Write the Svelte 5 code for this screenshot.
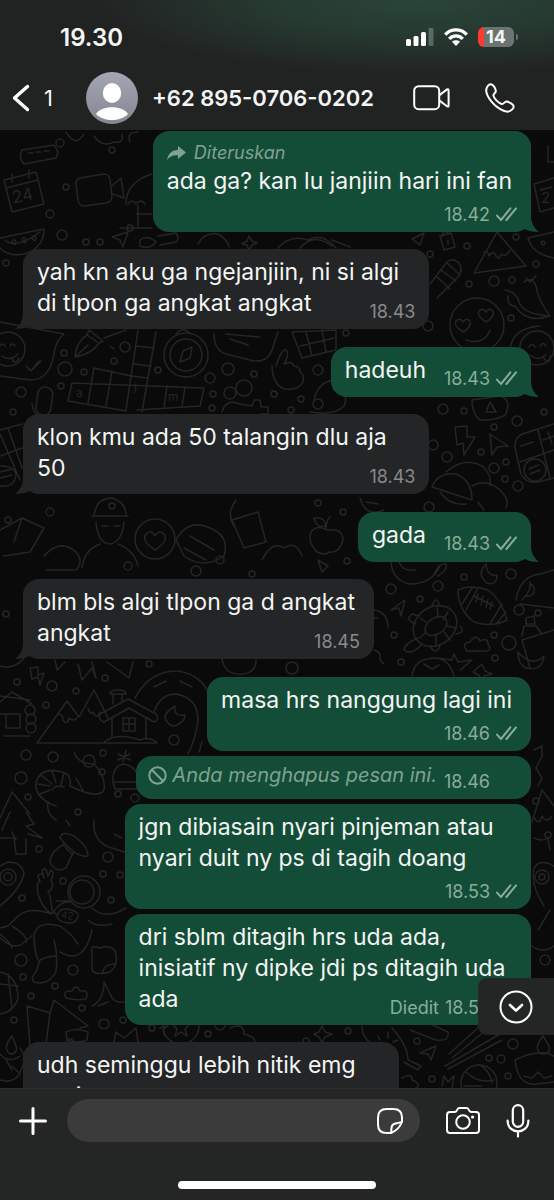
<script lang="ts">
    type Message = {
        id: number
        lines: Array<string>
        time: string
        out?: boolean
        tail?: boolean
        read?: boolean
        below?: boolean
        forwarded?: boolean
        deleted?: boolean
        edited?: boolean
        width?: number
    }

    const contact = '+62 895-0706-0202'

    const messages: Array<Message> = [
        { id: 1, lines: ['ada ga? kan lu janjiin hari ini fan'], time: '18.42', out: true, tail: true, read: true, below: true, forwarded: true },
        { id: 2, lines: ['yah kn aku ga ngejanjiin, ni si algi', 'di tlpon ga angkat angkat'], time: '18.43', tail: true, width: 80 },
        { id: 3, lines: ['hadeuh'], time: '18.43', out: true, tail: true, read: true },
        { id: 4, lines: ['klon kmu ada 50 talangin dlu aja', '50'], time: '18.43', tail: true, width: 80 },
        { id: 5, lines: ['gada'], time: '18.43', out: true, tail: true, read: true },
        { id: 6, lines: ['blm bls algi tlpon ga d angkat', 'angkat'], time: '18.45', tail: true },
        { id: 7, lines: ['masa hrs nanggung lagi ini'], time: '18.46', out: true, read: true, below: true },
        { id: 8, lines: ['Anda menghapus pesan ini.'], time: '18.46', out: true, deleted: true },
        { id: 9, lines: ['jgn dibiasain nyari pinjeman atau', 'nyari duit ny ps di tagih doang'], time: '18.53', out: true, read: true, below: true, width: 80 },
        { id: 10, lines: ['dri sblm ditagih hrs uda ada,', 'inisiatif ny dipke jdi ps ditagih uda', 'ada'], time: '18.53', out: true, read: true, edited: true, width: 80 },
        { id: 11, lines: ['udh seminggu lebih nitik emg', 'nasi'], time: '', width: 74 }
    ]

    // loose bubbles scattered between the wallpaper doodles: x, y, radius
    const dots = [
        [62, 235, 5], [86, 242, 3], [100, 242, 3], [6, 263, 3], [125, 347, 5], [64, 353, 3], [114, 361, 3],
        [65, 369, 7], [84, 372, 3], [158, 370, 3], [21, 392, 5], [61, 386, 3], [13, 412, 3], [210, 378, 5],
        [228, 369, 6], [254, 374, 3], [244, 388, 8], [230, 393, 6], [213, 394, 3], [212, 408, 3], [274, 394, 3],
        [318, 370, 5], [301, 399, 3], [291, 410, 3], [467, 246, 3], [516, 237, 3], [494, 281, 5], [512, 280, 3],
        [469, 284, 3], [536, 264, 3], [511, 318, 3], [428, 326, 5], [430, 254, 3], [346, 333, 3], [318, 404, 5],
        [443, 409, 5], [464, 411, 3], [517, 421, 5], [494, 427, 3], [544, 412, 3], [447, 457, 5], [481, 452, 3],
        [433, 445, 5], [494, 468, 5], [506, 462, 3], [505, 479, 3], [518, 486, 5], [429, 507, 5], [318, 503, 3],
        [343, 512, 3], [347, 561, 3], [464, 577, 3], [438, 586, 5], [511, 574, 5], [391, 589, 5], [420, 599, 3],
        [519, 610, 5], [538, 613, 3], [394, 635, 3], [494, 635, 3], [509, 643, 7], [401, 662, 3], [495, 658, 3],
        [149, 664, 3], [105, 678, 3], [52, 686, 5], [17, 682, 3], [76, 691, 3], [46, 705, 3], [174, 740, 5],
        [26, 755, 5], [53, 757, 5], [89, 761, 6], [103, 753, 3], [102, 772, 3], [21, 778, 6], [28, 797, 3],
        [118, 794, 3], [135, 798, 4], [78, 812, 3], [39, 849, 3], [108, 857, 5], [103, 874, 3], [120, 875, 3],
        [63, 881, 3], [22, 898, 3], [111, 900, 3], [21, 960, 6], [73, 970, 5], [23, 977, 3], [55, 986, 3],
        [31, 996, 3], [82, 1008, 3], [14, 1020, 3], [104, 1024, 5], [123, 1020, 3], [70, 1043, 4], [152, 1028, 3],
        [208, 1034, 3], [220, 1025, 5], [348, 1031, 3], [306, 1041, 3], [417, 1041, 3], [489, 1058, 3],
        [501, 1059, 4], [513, 1044, 5], [508, 1076, 3], [432, 1079, 3], [545, 960, 5], [536, 801, 3], [548, 835, 3],
        [60, 143, 4], [112, 150, 3], [66, 187, 3], [50, 214, 4], [130, 228, 3], [8, 520, 3], [50, 512, 4],
        [112, 506, 3], [128, 566, 4], [220, 560, 4], [252, 574, 3], [6, 614, 3], [196, 571, 5], [292, 668, 6]
    ]
</script>

{#snippet meta(m: Message)}
    <div class="meta">
        {#if m.edited}<span>Diedit</span>{/if}
        {#if m.time}<time>{m.time}</time>{/if}
        {#if m.read}
            <svg width="21" height="15" viewBox="0 0 21 15" fill="none" stroke="currentColor" stroke-width="2" stroke-linecap="round">
                <path d="M1 8.6 L5 13 L14.4 1.4 M10.4 13 L20 1.4" />
            </svg>
        {/if}
    </div>
{/snippet}

<main>
    <header>
        <div class="status">
            <span class="clock">19.30</span>
            <div class="status-icons">
                <svg width="28" height="18" viewBox="0 0 28 18" fill="#fff">
                    <rect x="0" y="11" width="5" height="7" rx="1.5" />
                    <rect x="7.5" y="8" width="5" height="10" rx="1.5" />
                    <rect x="15" y="4" width="5" height="14" rx="1.5" />
                    <rect x="22.5" y="0" width="5" height="18" rx="1.5" opacity="0.25" />
                </svg>
                <svg width="24" height="18" viewBox="0 0 24 18">
                    <g fill="none" stroke="#fff" stroke-width="3.2">
                        <path d="M1.2 6.6 C7 0.2 17 0.2 22.8 6.6" />
                        <path d="M5.2 10.8 C9 6.8 15 6.8 18.8 10.8" />
                    </g>
                    <path d="M12 18 L8 13.8 C10 11.8 14 11.8 16 13.8 Z" fill="#fff" />
                </svg>
                <div class="battery"><span>14</span></div>
            </div>
        </div>
        <div class="contact">
            <button class="back" aria-label="Kembali">
                <svg width="18" height="28" viewBox="0 0 18 28" fill="none" stroke="#fff" stroke-width="3.4" stroke-linecap="round" stroke-linejoin="round">
                    <path d="M15.5 2.5 L2.5 14 L15.5 25.5" />
                </svg>
                <span>1</span>
            </button>
            <svg class="avatar" viewBox="0 0 52 52">
                <defs>
                    <linearGradient id="avatar-bg" x1="0" y1="0" x2="0" y2="1">
                        <stop offset="0" stop-color="#a3a6b4" />
                        <stop offset="1" stop-color="#858791" />
                    </linearGradient>
                </defs>
                <circle cx="26" cy="26" r="26" fill="url(#avatar-bg)" />
                <ellipse cx="26" cy="21" rx="9.2" ry="10" fill="#fff" />
                <path d="M10 42 C15 33 37 33 42 42 C34 50 18 50 10 42 Z" fill="#fff" />
            </svg>
            <h1>{contact}</h1>
            <button class="video" aria-label="Panggilan video">
                <svg width="37" height="26" viewBox="0 0 37 26" fill="none" stroke="#fff" stroke-width="2" stroke-linejoin="round">
                    <rect x="1.2" y="1.2" width="25" height="23" rx="4.5" />
                    <path d="M26.2 10.4 L34 4.4 Q35.6 3.6 35.6 5.4 V20.4 Q35.6 22.2 34 21.2 L26.2 15.4" />
                </svg>
            </button>
            <button class="call" aria-label="Panggilan suara">
                <svg width="30" height="30" viewBox="0 0 30 30" fill="none" stroke="#fff" stroke-width="2" stroke-linejoin="round">
                    <path d="M1.5 5.5 C2.5 2.8 4.8 1.2 6.6 1.4 C8.6 1.8 10.6 6 10.8 8 C11 10 8.2 10.6 8.4 12.6 C8.8 15.4 13.8 20.4 16.8 21 C19 21.4 19.4 18.4 21.6 18.6 C23.6 18.8 28 21.2 28.6 23 C29 25.2 26.4 28 23.4 28.6 C19 29.2 11.4 24.4 7.4 19.6 C3.6 15.2 0.4 9.2 1.5 5.5 Z" />
                </svg>
            </button>
        </div>
    </header>

    <section class="chat">
        <svg class="wallpaper" viewBox="0 130 554 958" preserveAspectRatio="xMidYMin slice" aria-hidden="true">
            {#each dots as [x, y, r]}
                <circle cx={x} cy={y} r={r} />
            {/each}
            <!-- camera roll, calendar, palm hut -->
            <path d="M22 150 L54 145 Q60 152 56 158 L24 164 Q18 158 22 150 Z M28 153 h5 M36 152 h5 M44 151 h5" />
            <path d="M4 180 L36 172 L44 204 L12 212 Z M6 188 L38 180 M12 174 v8 M29 170 v8" />
            <path d="M80 178 L104 174 Q109 174 110 180 L112 196 Q112 202 106 203 L84 206 Q79 206 78 200 L76 184 Q76 179 80 178 Z M112 186 L121 178 L124 198 L113 194" />
            <path d="M126 204 Q126 182 152 174 M128 204 q4 -6 8 0 q5 -6 9 0 M138 206 v22 M136 214 h16 M120 228 h32" />
            <path d="M130 142 q-4 -10 8 -10 M94 136 q8 12 20 6 q10 2 8 -8 M66 132 q10 16 18 2" />
            <!-- melon slices, cursors, telescope -->
            <path d="M0 238 L44 229 Q44 248 24 254 Q8 257 0 248 M5 240 Q16 250 40 232 M12 242 q2 -5 4 0 q0 5 -4 0 M22 240 q2 -5 4 0 q0 5 -4 0 M32 238 q2 -5 4 0 q-1 5 -4 0" />
            <path d="M112 237 L128 232 L123 247 L120 240 Z M158 236 L176 233 Q180 239 176 242 L160 245 M140 240 q8 -6 16 2 q-6 8 -16 4 Z" />
            <path d="M278 248 q12 -14 30 -8 q14 -8 28 8 M300 248 q14 -16 32 -2 M332 240 L350 247 M412 239 L424 233 L420 245 Z M440 236 l11 -3 l4 14 l-11 3 Z M442 236 q2 -8 7 -2 M448 240 v4" />
            <path d="M198 244 Q204 232 218 234 Q228 240 229 247 M249 236 l3 5 l5 2 l-5 2 l-3 5 l-2 -5 l-5 -1 l5 -3 Z" />
            <!-- peak, pencil, chilies -->
            <path d="M474 273 L497 232 L526 266 Z M484 252 q4 -2 5 4 q4 -6 6 -2 q4 8 6 0 q5 4 9 -4" />
            <path d="M430 284 L447 262 Q452 257 459 263 Q463 269 459 276 L437 298 M436 276 L450 289 M441 270 L456 281 M447 263 L460 275" />
            <path d="M505 290 q12 2 14 12 q4 12 30 14 q-22 8 -34 -10 q-8 0 -7 -10 M524 282 q8 -6 12 4 q2 14 14 30 M526 278 l4 4 l6 -6" />
            <path d="M528 238 L554 232 M528 238 Q532 254 554 258 M541 243 q2 -4 4 0 q0 4 -4 0" />
            <path d="M548 146 v16 h6 M530 160 a4 4 0 1 0 0 8 M534 184 L554 178 M534 184 L540 212 L554 208 M540 190 l12 -3" />
            <!-- faces -->
            <circle cx="477" cy="325" r="27" />
            <path d="M463 332 q-10 -6 -7 -11 q4 -4 7 1 q3 -5 7 -1 q2 6 -7 11 Z M486 322 q-10 -6 -7 -11 q4 -4 7 1 q3 -5 7 -1 q2 6 -7 11 Z M466 340 q18 6 24 -10" />
            <circle cx="537" cy="348" r="17" />
            <path d="M510 350 Q512 328 540 326 M529 347 q3 -5 6 0 M540 346 q3 -5 6 0 M530 355 q8 7 16 0 M543 357 l4 5 q4 -1 3 -6" />
            <path d="M0 322 L64 334 Q56 340 54 354 Q50 380 30 380 L0 376 M26 366 l5 5 l8 -10 M32 370 l9 -9" />
            <circle cx="8" cy="349" r="17" />
            <path d="M0 346 q3 -4 5 0 M10 346 q3 -4 5 0 M2 356 q8 6 16 -2 M12 358 q2 8 7 0" />
            <!-- pen, crossword, compass -->
            <path d="M75 357 Q76 342 87 335 L99 343 Q92 354 75 357 Z M75 357 L88 345 M87 335 L89 330 L103 341 L99 343 M104 338 L126 330 M110 346 l4 3" />
            <path d="M72 383 L204 388 L200 406 L137 410 M72 383 L68 401 L126 411 M94 368 L131 376 L148 378 M94 368 L88 403 M112 371 L106 406 M138 330 L126 410 M156 332 L142 412 M136 346 L154 348 M134 364 L151 366 M167 386 L164 407 M185 387 L182 406" />
            <circle cx="186" cy="355" r="22" />
            <circle cx="186" cy="355" r="16" />
            <path d="M180 362 L183 351 L192 347 L190 358 Z M176 334 q6 -8 14 -1" />
            <path d="M214 334 Q214 350 226 354 L254 361 Q268 362 272 350 L278 332 M226 334 L260 337 M230 339 L248 345" />
            <path d="M292 332 L336 330 L336 350 L302 358 Z M300 346 L334 338 M306 332 l6 24 M322 330 l4 22" />
            <path d="M276 366 Q282 348 286 350 Q290 354 284 364 q8 -4 10 2 q6 0 6 6 q6 4 2 12 q-8 8 -20 4 q-10 -6 -10 -22 M314 400 q4 -18 20 -20 q8 6 0 10 q16 2 10 16 q-10 10 -34 6" />
            <rect x="37" y="387" width="15" height="28" rx="7" transform="rotate(8 44 400)" />
            <path d="M32 404 q2 14 16 16 M222 412 q4 -14 18 -8 l12 2 l2 -6 h6 l1 7 h7 v7 h-7 l-2 6" />
            <!-- lock, bolt, calculator, umbrellas -->
            <path d="M472 400 L500 396 Q508 398 508 406 L506 414 Q500 420 480 420 Q472 414 472 400 Z M490 402 l6 10 h-10 Z" />
            <path d="M455 427 L467 426 L467 437 L475 437 L464 455 L463 443 L457 445 Z M490 434 L508 446 L497 447 L492 455 Z" />
            <path d="M554 424 L522 434 Q514 438 515 448 L521 474 Q526 484 538 482 L554 478 M520 462 L554 450 M538 430 L550 478 M521 446 l12 -4 M543 440 l12 -4 M548 432 l4 12" />
            <circle cx="535" cy="470" r="11" />
            <path d="M529 469 l10 -4 M530 474 l10 -4 M432 487 Q438 472 456 474 Q472 480 472 500 Z M446 472 Q464 456 482 466 Q492 474 490 486 M472 486 Q486 478 500 490 Q510 500 506 508 M440 492 q10 14 26 12 M478 502 l6 8" />
            <path d="M0 430 L22 424 M0 434 l20 46 M0 456 L22 448 M8 428 l14 40 M0 466 q16 0 16 10 q-2 12 -16 10 M0 472 l12 -3 M0 478 l12 -3" />
            <!-- apple, boy, book -->
            <path d="M327 530 q-10 -6 -16 2 q-4 10 6 20 q8 4 12 0 q10 2 14 -12 q0 -12 -16 -10 Z M326 529 q0 -8 4 -12 M326 526 q-10 2 -12 -8 q10 -2 12 8" />
            <circle cx="155" cy="539" r="20" />
            <path d="M155 550 q-14 -9 -9 -16 q6 -5 9 2 q4 -7 9 -2 q5 7 -9 16 Z M94 516 q2 -18 18 -18 q14 4 14 18 M92 516 h36 M96 522 q2 22 14 22 q12 -2 14 -22 M100 544 q-16 6 -18 24 M118 544 q16 6 20 22 M102 526 h6 M114 526 h6" />
            <path d="M0 530 L22 518 L44 528 L30 552 L4 556 M22 518 l-8 24 M44 556 q16 -18 32 -4 q8 10 0 18 h-30 M232 520 l26 -8 l8 30 l-22 6 Z M262 560 q10 -20 22 -12 q12 -8 18 8 M236 500 q-10 14 -2 26 M360 498 q6 20 24 12 M366 502 l12 2" />
            <path d="M176 540 q12 -22 34 -12 q20 8 14 28 q-20 14 -40 0 Z M190 536 l24 14 M184 548 l22 12 M318 560 l4 12 l6 -6 Z" />
            <!-- dog, moon, ball, taco, turtle, cloud -->
            <path d="M391 562 Q392 580 410 584 Q432 584 440 566 M399 562 q4 10 16 8 M434 574 q6 -12 12 -10 q2 6 -8 12 M486 564 q-10 10 1 19 q10 3 10 -8 q-10 2 -11 -11 Z" />
            <path d="M458 590 Q470 584 488 590 Q502 600 507 620 Q492 628 474 622 Q458 610 458 590 Z M472 588 l-10 16 M478 588 l-12 22 M502 604 l-12 20 M506 612 l-10 12 M474 596 l20 10 M478 594 l-2 8 M483 596 l-2 9 M488 599 l-2 8 M492 602 l-2 7" />
            <path d="M516 600 Q520 576 540 574 L554 570 M520 604 L554 608 M522 600 q10 -10 8 -18 M526 596 a6 6 0 1 0 4 -12" />
            <ellipse cx="435" cy="626" rx="23" ry="19" transform="rotate(-35 435 626)" />
            <ellipse cx="436" cy="626" rx="12" ry="8" transform="rotate(-35 436 626)" />
            <path d="M437 606 l1 11 M420 618 l6 4 M448 612 l-5 8 M456 628 l-9 -2 M436 646 v-12 M420 638 l6 -6 M450 640 l-6 -8 M432 606 q4 -12 8 0 M416 624 q-12 -4 -4 -10 l7 2 M418 638 q-14 6 -14 12 q8 6 18 -6 M430 646 q6 10 10 0 M456 634 q10 -2 4 -8 M391 610 L405 600 L401 616 L399 608 Z" />
            <path d="M467 651 q-6 -8 3 -9 q6 -9 10 -1 q8 -4 8 3 q5 8 -4 7 Z M412 676 Q414 658 436 658 Q450 660 454 676 M436 658 l16 2 l2 -6 l4 8 l14 -2 l-12 10 M424 664 l8 5 l7 -4 M482 664 l3 7 l7 3 l-8 2 l-2 4 l-3 -5 l-6 -3 Z" />
            <path d="M522 640 L554 630 M522 640 l8 28 M524 626 h12 l6 8 M524 626 l-2 10 M526 618 l8 -2 l1 8 h-9 Z M518 652 q14 16 26 4 q-2 16 -18 12 q-8 -4 -8 -16 M374 610 q14 2 14 18 M374 618 h4 M374 650 q8 2 6 10 l4 4" />
            <!-- cabin, mountains, house, road -->
            <path d="M0 702 L12 692 L32 704 M0 696 L30 700 M0 714 l6 0 v14 h14 v-14 h-14 M4 736 h26" />
            <circle cx="30" cy="710" r="5" />
            <circle cx="31" cy="719" r="5" />
            <circle cx="31" cy="728" r="5" />
            <path d="M37 743 L67 701 L79 717 L94 690 L108 718 M58 714 q5 0 5 6 q4 6 6 -2 q4 4 8 0 M88 708 q2 8 5 4 q4 8 7 0 M37 743 H157 Q150 736 140 740 Q118 732 104 742 M100 714 L128 699 L156 714 Q160 720 154 722 L129 708 L104 722 Q98 720 100 714 Z M112 718 V738 M146 718 V738 M113 704 V694 M122 700 V694 M110 694 q0 -4 8 -4 q8 0 8 4 Z M123 718 h12 v13 h-12 Z M129 718 v13 M123 724 h12" />
            <path d="M135 698 Q150 670 178 671 Q208 676 212 706 M154 712 Q160 694 176 694 Q198 698 198 720 Q196 738 188 754 M154 687 l12 -6 M180 681 l12 6 M202 742 l-3 10 M175 706 q-10 6 -10 12 q4 10 12 7 q8 -4 8 -10 q-12 2 -10 -9" />
            <path d="M55 660 l2 10 l8 -8 M78 664 l4 16 l10 -12 l4 10 l-4 -16 M107 662 l22 16 l4 -16 M30 668 l8 -1 v8 l6 -2 l-4 12 l-2 -8 l-6 2 Z M222 658 q2 18 22 16 q12 -2 12 -14 M0 666 q14 4 24 -8" />
            <!-- shrimp, beanie, pines -->
            <path d="M56 806 Q34 798 36 782 Q42 766 62 772 Q72 774 70 786 Q98 800 104 790 Q106 776 94 764 Q78 764 74 752 M48 802 q-2 12 8 18 M52 790 q4 -6 12 -3 M38 784 l12 2 M42 776 l10 8 M52 771 l4 12 M64 773 l-3 12 M40 794 l10 -4 M76 778 l8 14 M113 782 Q112 766 124 764 Q134 766 137 774 M113 782 h24 v7 h-22 Z" />
            <path d="M118 754 l12 6 M126 750 l-3 12 M118 760 l12 -6 M0 818 L12 792 L30 814 M2 830 L10 812 M26 812 l8 12 l-8 2 l16 12 l-14 -4 M0 838 h16 M14 838 l2 16 h10 l0 -15 M12 832 l4 8 M94 820 q-2 18 12 26 l18 6 M114 834 l8 4 M66 820 l4 6" />
            <path d="M60 838 Q62 830 74 836 Q88 846 88 856 Q76 858 60 838 Z M64 846 l8 8 M64 844 Q50 852 50 862 Q56 874 66 868 Q70 858 74 852 M0 906 Q20 890 24 874 Q22 862 8 862 L0 866" />
            <circle cx="8" cy="877" r="8" />
            <circle cx="8" cy="877" r="4" />
            <!-- astronaut -->
            <circle cx="84" cy="892" r="16" />
            <circle cx="82" cy="892" r="12" />
            <path d="M38 894 Q36 880 40 882 L38 876 q4 -6 6 2 l-2 -8 q4 -4 6 6 l3 -6 q4 2 0 10 q4 8 -3 12 Q50 892 52 910 L56 914 M38 894 Q42 908 52 914 M52 914 Q60 900 72 902 M56 901 h14 M92 908 Q102 918 118 912 L126 908 M88 920 Q96 928 112 924 M52 914 Q30 906 18 916 L8 926 L0 928 M0 938 Q14 950 22 944 L32 936 M12 926 Q28 936 26 942 M0 934 Q12 944 12 948 M34 934 Q38 920 60 926 Q72 934 78 944 M34 934 Q34 952 38 960 M54 940 Q58 954 56 972 Q48 986 34 982 Q30 978 36 972 L40 960 Q48 956 56 956 M60 952 Q84 966 92 930 M57 916 q2 -8 10 -7 q12 2 11 7 q-2 8 -10 7 q-10 -1 -11 -7 Z" />
            <path d="M92 952 Q90 944 100 948 Q114 944 116 954 Q118 966 110 972 Q96 976 92 970 Z M102 974 q2 -10 12 -10 M66 998 q-4 -8 6 -7 q4 -8 8 0 q10 -2 6 8 q-10 2 -20 -1 Z M92 1006 Q104 1000 104 982 L110 994 Q114 1004 124 1002 M98 1006 l10 -4 M0 972 Q18 976 18 998 Q14 1012 0 1014 M0 984 l18 2 M8 974 l4 34" />
            <path d="M27 1006 L50 1013 L54 1000 L88 1026 L80 1028 M27 1006 L30 1046 M50 1013 L46 1044 M66 1032 q10 -5 22 0 l-1 8 q-10 4 -20 0 Z M12 1036 q-10 12 -2 18 q8 0 6 -8 Z M0 1054 q8 10 20 2 M6 1060 l6 10 M0 1080 q12 4 20 -6 l-8 -8 M20 1048 q8 10 0 24 M114 1042 l2 -10 l8 6 l12 -10 l2 14 M160 1028 l8 -2 l-5 4 l2 6" />
            <circle cx="181" cy="1026" r="18" />
            <path d="M181 1018 l3 6 h6 l-5 5 l2 7 l-6 -4 l-6 4 l2 -7 l-5 -5 h6 Z M230 1028 q14 -6 14 6 q16 4 8 12 M322 1026 l3 6 l7 2 l-7 3 l-3 6 l-3 -6 l-5 -3 l5 -2 Z" />
            <!-- balloon, chopsticks, ball, lamp -->
            <path d="M362 1026 Q362 1038 372 1044 M392 1028 Q408 1046 408 1060 L421 1066 L418 1070 L404 1062 M378 1036 l2 4 M388 1032 v6 M398 1040 l-5 2 M410 1030 l26 10 q14 2 12 -8 l-18 -8 M420 1053 L436 1046 L431 1060 L428 1054 Z M449 1054 L480 1026 M452 1058 L486 1030 M445 1066 L500 1034 M448 1069 L502 1040 M402 1078 q10 -6 10 2 q10 4 4 8 M442 1086 l2 -10 l4 6 l6 -6 l-2 12" />
            <circle cx="479" cy="1083" r="18" />
            <path d="M466 1072 q12 12 28 8 M480 1065 q10 6 12 18 M464 1086 h18 M543 1036 q-10 12 -2 18 q10 0 8 -8 Z M515 1060 Q540 1048 554 1056 M515 1060 Q518 1086 536 1084 L554 1082 M524 1076 l8 2 l6 -6 l6 6 l8 -2" />
            <!-- right edge -->
            <path d="M534 750 l8 -4 v10 l-6 12 l6 10 l-4 8 M532 822 L542 790 L554 806 M534 818 q6 8 8 -2 q4 8 10 0 M534 838 q8 4 14 0 l2 12 M538 930 l12 -20 M532 946 q10 8 22 0 M554 866 Q540 858 534 868 Q530 884 544 906" />
            <circle cx="542" cy="877" r="7" />
            <circle cx="542" cy="877" r="3" />
            <g class="lettering">
                <text x="12" y="202" font-size="17" transform="rotate(-12 20 196)">24</text>
                <text x="61" y="919" font-size="10" transform="rotate(10 68 916)">42</text>
                <text x="76" y="397" font-size="12">a</text>
                <text x="134" y="391" font-size="12">j</text>
                <text x="168" y="401" font-size="12">m</text>
                <text x="541" y="203" font-size="15">2</text>
            </g>
        </svg>

        <ul>
            {#each messages as m (m.id)}
                <li class:out={m.out} class:deleted={m.deleted} class:single={m.lines.length === 1 && !m.below} style:width={m.width ? m.width + '%' : null}>
                    {#if m.forwarded}
                        <p class="forwarded">
                            <svg width="19" height="14" viewBox="0 0 19 14" fill="currentColor">
                                <path d="M11 0 L19 6.6 L11 13 V9.4 C6 9 3 10.4 0 14 C1 8.6 4 4.4 11 3.8 Z" />
                            </svg>
                            Diteruskan
                        </p>
                    {/if}
                    {#if m.deleted}
                        <svg class="ban" width="19" height="19" viewBox="0 0 19 19" fill="none" stroke="currentColor" stroke-width="2">
                            <circle cx="9.5" cy="9.5" r="8.2" />
                            <path d="M3.8 3.8 L15.2 15.2" />
                        </svg>
                    {/if}
                    {#if m.below}
                        {#each m.lines as line}
                            <p class="text">{line}</p>
                        {/each}
                        <div class="below">{@render meta(m)}</div>
                    {:else}
                        {#each m.lines.slice(0, -1) as line}
                            <p class="text">{line}</p>
                        {/each}
                        <div class="last">
                            <p class="text">{m.lines[m.lines.length - 1]}</p>
                            {@render meta(m)}
                        </div>
                    {/if}
                    {#if m.tail}
                        <svg class="tail" width="22" height="22" viewBox="0 0 22 22">
                            <path d="M0 0 H14 V6 C14 13 17 18 22 22 C16 22 11 21 8 19 L0 22 Z" />
                        </svg>
                    {/if}
                </li>
            {/each}
        </ul>

        <button class="scroll-down" aria-label="Ke pesan terbaru">
            <svg width="34" height="34" viewBox="0 0 34 34" fill="none" stroke="#fff" stroke-width="2" stroke-linecap="round" stroke-linejoin="round">
                <circle cx="17" cy="17" r="15.5" />
                <path d="M11 15 L17 20.6 L23 15" stroke-width="2.6" />
            </svg>
        </button>
    </section>

    <footer>
        <div class="compose">
            <button class="add" aria-label="Lampirkan">
                <svg width="28" height="28" viewBox="0 0 28 28" stroke="#fff" stroke-width="3" stroke-linecap="round">
                    <path d="M14 1.5 V26.5 M1.5 14 H26.5" />
                </svg>
            </button>
            <div class="field">
                <input type="text" aria-label="Pesan" />
                <button aria-label="Stiker">
                    <svg width="26" height="26" viewBox="0 0 26 26" fill="none" stroke="#fff" stroke-width="2" stroke-linejoin="round">
                        <path d="M14 25 H9.5 Q1 25 1 16.5 V9.5 Q1 1 9.5 1 H16.5 Q25 1 25 9.5 V14 C23 19 19 23 14 25 Z" />
                        <path d="M14 25 C14.6 22 14 20.4 15 18 C16.4 14.8 21 15.6 25 14" />
                    </svg>
                </button>
            </div>
            <button class="camera" aria-label="Kamera">
                <svg width="34" height="27" viewBox="0 0 34 27" fill="none" stroke="#fff" stroke-width="2" stroke-linejoin="round">
                    <path d="M4 5 H8.6 Q10 5 10.8 3.6 L11.4 2.4 Q12 1 13.6 1 H20.4 Q22 1 22.6 2.4 L23.2 3.6 Q24 5 25.4 5 H30 Q33 5 33 8 V23 Q33 26 30 26 H4 Q1 26 1 23 V8 Q1 5 4 5 Z" />
                    <circle cx="17" cy="15" r="6.8" />
                    <circle cx="26.6" cy="10" r="1.6" fill="#fff" stroke="none" />
                </svg>
            </button>
            <button class="mic" aria-label="Rekam suara">
                <svg width="24" height="34" viewBox="0 0 24 34" fill="none" stroke="#fff" stroke-width="2.2" stroke-linecap="round">
                    <rect x="6.8" y="1.2" width="10.4" height="21.6" rx="5.2" />
                    <path d="M1.6 16.5 C1.6 31 22.4 31 22.4 16.5 M12 27.5 V32.6" />
                </svg>
            </button>
        </div>
        <div class="home-bar"></div>
    </footer>
</main>

<style>
    :global(body) {
        background: #0a0a0a;
    }
    main {
        display: flex;
        flex-direction: column;
        height: 100vh;
        overflow: hidden;
        color: #f4f6f5;
        font-family: Inter, "Liberation Sans", sans-serif;
    }
    button {
        display: flex;
        align-items: center;
        justify-content: center;
        padding: 0;
        border: 0;
        background: none;
        color: inherit;
        font: inherit;
    }
    svg {
        display: block;
        flex: none;
    }
    p, h1, ul {
        margin: 0;
        padding: 0;
    }

    header {
        flex: none;
        background: radial-gradient(ellipse 60% 76px at 76% 0, #2a4438 0%, #263a31 45%, #212222 100%);
    }
    .status {
        display: flex;
        align-items: center;
        justify-content: space-between;
        height: 50px;
        padding: 12px 40px 0 60px;
    }
    .clock {
        font-size: 24px;
        font-weight: 600;
    }
    .status-icons {
        display: flex;
        align-items: center;
        gap: 10px;
    }
    .battery {
        position: relative;
        width: 36px;
        height: 20px;
        border-radius: 6px;
        background: linear-gradient(to right, #fb3b30 6px, #6b7471 6px);
        font-size: 18px;
        font-weight: 700;
        line-height: 20px;
        text-align: center;
    }
    .battery::after {
        content: '';
        position: absolute;
        top: 7px;
        right: -4px;
        width: 2px;
        height: 6px;
        border-radius: 0 2px 2px 0;
        background: #6b7471;
    }
    .contact {
        display: flex;
        align-items: center;
        padding: 10px 39px 6px 12px;
    }
    .back {
        gap: 14px;
        width: 74px;
        justify-content: flex-start;
        font-size: 22px;
    }
    .avatar {
        width: 52px;
        height: 52px;
    }
    h1 {
        flex: 1;
        margin-left: 14px;
        font-size: 22px;
        font-weight: 600;
        white-space: nowrap;
    }
    .call {
        margin-left: 35px;
    }

    .chat {
        position: relative;
        flex: 1;
        min-height: 0;
        overflow: hidden;
        background: #0a0a0a;
    }
    .wallpaper {
        position: absolute;
        inset: 0;
        width: 100%;
        height: 100%;
        fill: none;
        stroke: #252525;
        stroke-width: 1.5;
        stroke-linecap: round;
        stroke-linejoin: round;
    }
    .lettering {
        fill: #252525;
        stroke: none;
    }
    ul {
        position: relative;
        display: flex;
        flex-direction: column;
        align-items: flex-start;
        padding: 1px 23px 0;
        list-style: none;
    }
    li {
        position: relative;
        box-sizing: border-box;
        flex: none;
        min-height: 50px;
        margin-top: 17px;
        padding: 8px 14px 6px;
        border-radius: 16px;
        background: #242527;
        color: #f4f6f5;
    }
    li.out {
        align-self: flex-end;
        background: #144d37;
    }
    li:first-child {
        margin-top: 0;
    }
    li:not(.out) + .out {
        margin-top: 18px;
    }
    .out + .out {
        margin-top: 5px;
    }
    .text {
        padding-right: 5px;
        font-size: 23px;
        line-height: 31px;
        white-space: nowrap;
    }
    .single .text {
        padding-right: 0;
    }
    .forwarded {
        display: flex;
        align-items: center;
        gap: 8px;
        height: 27px;
        color: #7fa392;
        font-size: 18px;
        font-style: italic;
    }
    .last {
        display: flex;
        align-items: flex-start;
        justify-content: space-between;
        gap: 18px;
    }
    .meta {
        display: flex;
        align-items: center;
        justify-content: flex-end;
        gap: 6px;
        height: 24px;
        color: #898a8c;
        font-size: 18px;
    }
    .last .meta {
        margin-top: 11px;
    }
    .below {
        padding-top: 5px;
    }
    .out .meta {
        color: #89ac9b;
    }
    .deleted {
        display: flex;
        align-items: center;
        gap: 5px;
        min-height: 43px;
        padding: 0 41px 4px 12px;
        color: #7fa392;
    }
    .deleted .last {
        gap: 7px;
    }
    .deleted .text {
        font-size: 20px;
        font-style: italic;
    }
    .deleted .last .meta {
        margin-top: 9px;
        margin-bottom: -2px;
    }
    .tail {
        position: absolute;
        left: -8px;
        bottom: 0;
        transform: scaleX(-1);
        fill: #242527;
    }
    .out .tail {
        left: auto;
        right: -8px;
        transform: none;
        fill: #144d37;
    }
    .scroll-down {
        position: absolute;
        right: 0;
        bottom: 53px;
        width: 76px;
        height: 57px;
        border-radius: 9px 0 0 9px;
        background: #242625;
    }

    footer {
        flex: none;
        border-top: 1px solid #2b2d2c;
        background: #242625;
    }
    .compose {
        display: flex;
        align-items: center;
        padding: 10px 24px 0 19px;
    }
    .field {
        display: flex;
        flex: 1;
        align-items: center;
        min-width: 0;
        height: 43px;
        margin: 0 26px 0 20px;
        padding-right: 17px;
        border-radius: 22px;
        background: #3b3b3b;
    }
    input {
        flex: 1;
        box-sizing: border-box;
        min-width: 0;
        height: 100%;
        padding: 0 18px;
        border: 0;
        outline: 0;
        background: none;
        color: #fff;
        font: inherit;
        font-size: 23px;
    }
    .mic {
        margin-left: 26px;
    }
    .home-bar {
        width: 198px;
        height: 8px;
        margin: 39px auto 11px;
        border-radius: 4px;
        background: #fff;
    }
</style>
